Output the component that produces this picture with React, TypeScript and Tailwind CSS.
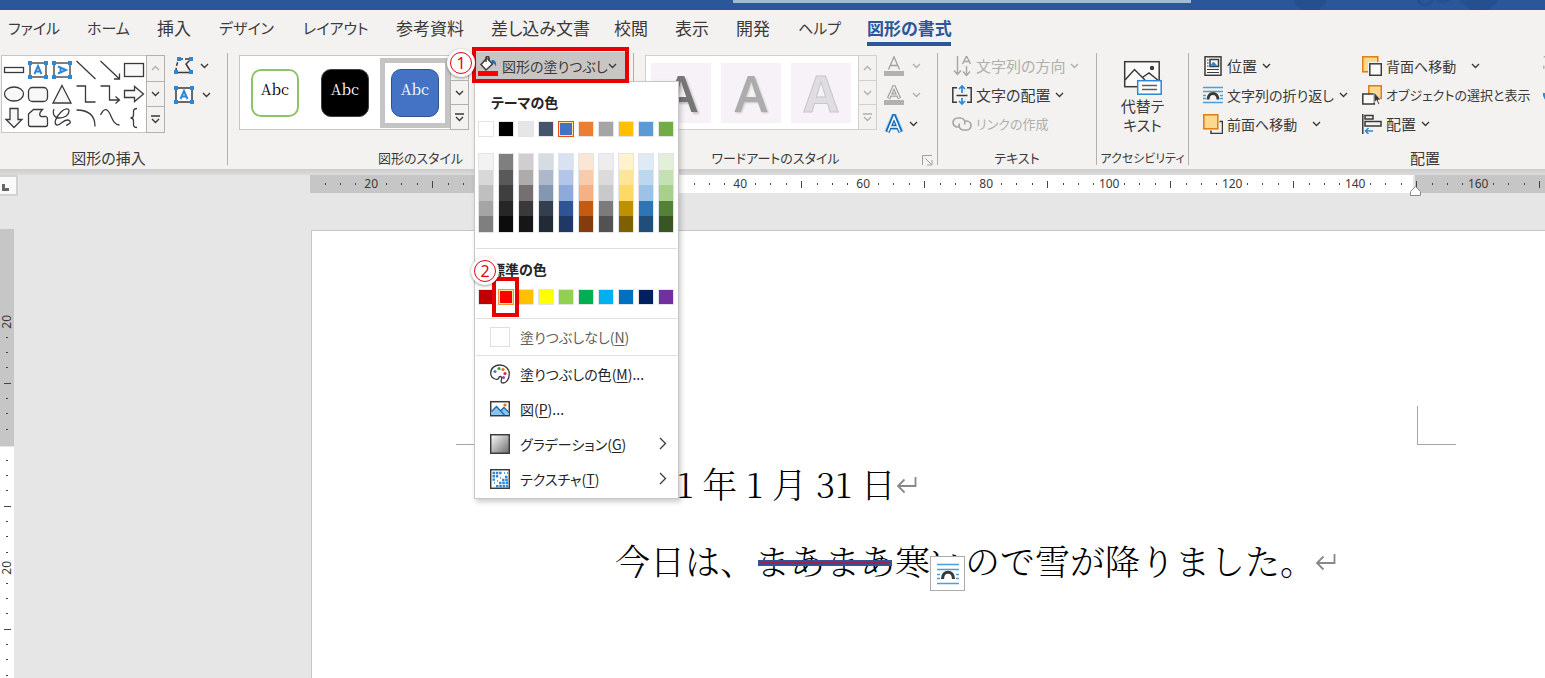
import type { ReactNode } from "react";
import clsx from "clsx";

const tabs = [
	{ label: "ファイル", width: "w-[79px]", kana: true },
	{ label: "ホーム", width: "w-[70px]", kana: true },
	{ label: "挿入", width: "w-[62px]" },
	{ label: "デザイン", width: "w-[84px]", kana: true },
	{ label: "レイアウト", width: "w-[93px]", kana: true },
	{ label: "参考資料", width: "w-[95px]" },
	{ label: "差し込み文書", width: "w-[123px]" },
	{ label: "校閲", width: "w-[61px]" },
	{ label: "表示", width: "w-[61px]" },
	{ label: "開発", width: "w-[62px]" },
	{ label: "ヘルプ", width: "w-[69px]", kana: true },
	{ label: "図形の書式", width: "w-[84px]", active: true },
];

const themeColors = [
	{ name: "白", base: "bg-white", shades: ["bg-[#f2f2f2]", "bg-[#d8d8d8]", "bg-[#bfbfbf]", "bg-[#a5a5a5]", "bg-[#7f7f7f]"] },
	{ name: "黒", base: "bg-black", shades: ["bg-[#7f7f7f]", "bg-[#595959]", "bg-[#3f3f3f]", "bg-[#262626]", "bg-[#0c0c0c]"] },
	{ name: "薄い灰色", base: "bg-[#e7e6e6]", shades: ["bg-[#d0cece]", "bg-[#aeabab]", "bg-[#757070]", "bg-[#3a3838]", "bg-[#171616]"] },
	{ name: "青灰", base: "bg-[#44546a]", shades: ["bg-[#d6dce4]", "bg-[#adb9ca]", "bg-[#8496b0]", "bg-[#323f4f]", "bg-[#222a35]"] },
	{ name: "青", base: "bg-[#4472c4]", shades: ["bg-[#d9e2f3]", "bg-[#b4c6e7]", "bg-[#8eaadb]", "bg-[#2f5496]", "bg-[#1f3864]"], selected: true },
	{ name: "オレンジ", base: "bg-[#ed7d31]", shades: ["bg-[#fbe5d5]", "bg-[#f7cbac]", "bg-[#f4b183]", "bg-[#c55a11]", "bg-[#833c0b]"] },
	{ name: "灰色", base: "bg-[#a5a5a5]", shades: ["bg-[#ededed]", "bg-[#dbdbdb]", "bg-[#c9c9c9]", "bg-[#7b7b7b]", "bg-[#525252]"] },
	{ name: "ゴールド", base: "bg-[#ffc000]", shades: ["bg-[#fff2cc]", "bg-[#fee599]", "bg-[#ffd965]", "bg-[#bf9000]", "bg-[#7f6000]"] },
	{ name: "薄い青", base: "bg-[#5b9bd5]", shades: ["bg-[#deebf6]", "bg-[#bdd7ee]", "bg-[#9cc3e5]", "bg-[#2e75b5]", "bg-[#1e4e79]"] },
	{ name: "緑", base: "bg-[#70ad47]", shades: ["bg-[#e2efd9]", "bg-[#c5e0b3]", "bg-[#a8d08d]", "bg-[#538135]", "bg-[#375623]"] },
];

const standardColors = [
	{ name: "濃い赤", color: "bg-[#c00000]" },
	{ name: "赤", color: "bg-[#ff0000]", selected: true },
	{ name: "オレンジ", color: "bg-[#ffc000]" },
	{ name: "黄", color: "bg-[#ffff00]" },
	{ name: "薄い緑", color: "bg-[#92d050]" },
	{ name: "緑", color: "bg-[#00b050]" },
	{ name: "薄い青", color: "bg-[#00b0f0]" },
	{ name: "青", color: "bg-[#0070c0]" },
	{ name: "濃い青", color: "bg-[#002060]" },
	{ name: "紫", color: "bg-[#7030a0]" },
];

const horizontalLabels = ["20", "", "20", "40", "60", "80", "100", "120", "140", "160"];
const verticalLabels = ["20", "", "20"];

function Chevron({ muted, up }: { muted?: boolean; up?: boolean }) {
	return (
		<svg width="9" height="6" viewBox="0 0 9 6" fill="none" stroke={muted ? "#b1afad" : "#3b3a39"} strokeWidth="1.4" className="shrink-0">
			<path d={up ? "M1 5l3.5-3.5L8 5" : "M1 1l3.5 3.5L8 1"} />
		</svg>
	);
}

function MoreIcon({ muted }: { muted?: boolean }) {
	return (
		<svg width="9" height="9" viewBox="0 0 9 9" fill="none" stroke={muted ? "#b1afad" : "#3b3a39"} strokeWidth="1.4">
			<path d="M0 1h9M1 4l3.5 3.5L8 4" />
		</svg>
	);
}

function GalleryScroll({ muted, upMuted }: { muted?: boolean; upMuted?: boolean }) {
	const button = "flex w-full flex-1 items-center justify-center border-b last:border-b-0";
	return (
		<div className={clsx("flex w-[19px] flex-col border bg-[#f3f2f1]", muted ? "border-[#d2d0ce]" : "border-[#b3b0ad]")}>
			<button aria-label="前の行" className={clsx(button, muted ? "border-[#d2d0ce]" : "border-[#b3b0ad]")}>
				<Chevron up muted={muted || upMuted} />
			</button>
			<button aria-label="次の行" className={clsx(button, muted ? "border-[#d2d0ce]" : "border-[#b3b0ad]")}>
				<Chevron muted={muted} />
			</button>
			<button aria-label="その他" className={button}>
				<MoreIcon muted={muted} />
			</button>
		</div>
	);
}

function Handles() {
	return (
		<g fill="#2b88d8" stroke="none">
			<rect x="2" y="3" width="4" height="4" />
			<rect x="18" y="3" width="4" height="4" />
			<rect x="2" y="17" width="4" height="4" />
			<rect x="18" y="17" width="4" height="4" />
		</g>
	);
}

function LetterBox({ vertical }: { vertical?: boolean }) {
	return (
		<>
			<rect x="4" y="5" width="16" height="14" fill="#fff" />
			<Handles />
			<g transform={vertical ? "rotate(90 12 12)" : undefined} stroke="#2b88d8" strokeWidth="2">
				<path d="M8.500 16L12 8l3.500 8M9.600 13.500h4.800" />
			</g>
		</>
	);
}

const shapes: { name: string; icon: ReactNode }[] = [
	{ name: "枠", icon: <rect x="2.500" y="9.500" width="19" height="5" fill="#fff" /> },
	{ name: "テキスト ボックス", icon: <LetterBox /> },
	{ name: "縦書きテキスト ボックス", icon: <LetterBox vertical /> },
	{ name: "線", icon: <path d="M2.500 3l19 18" /> },
	{ name: "矢印", icon: <path d="M2.500 3l19 18M21.500 15.500V21H16" /> },
	{ name: "正方形", icon: <rect x="2.500" y="5.500" width="19" height="13" fill="#f8f8f8" /> },
	{ name: "楕円", icon: <ellipse cx="12" cy="12" rx="9.500" ry="7" fill="#f8f8f8" /> },
	{ name: "角丸四角形", icon: <rect x="2.500" y="5.500" width="19" height="14" rx="4" fill="#f8f8f8" /> },
	{ name: "三角形", icon: <path d="M12 3.500L21 21H3z" fill="#f8f8f8" /> },
	{ name: "カギ線", icon: <path d="M2.500 4h9v16h10" /> },
	{ name: "カギ線矢印", icon: <path d="M2.500 4h9v14h10M17.500 14.500l4 3.500-4 3.500" /> },
	{ name: "右矢印", icon: <path d="M2.500 8.500h10V4.500l9 7.500-9 7.500v-4h-10z" fill="#f8f8f8" /> },
	{ name: "下矢印", icon: <path d="M8 2.500h8v11h4L12 21.500 4 13.500h4z" fill="#f8f8f8" /> },
	{ name: "フリーフォーム", icon: <path d="M2.500 8l5-4.500h9c-4 4-4 8 2 7 3-.5 3 2 3 4v4c0 1.500-1 2-2 2h-15c-1.500 0-2-1-2-2z" fill="#f8f8f8" /> },
	{ name: "曲線", icon: <path d="M4 3c-2 4 0 9 5 9 6 0 10-3 10-7 0-3-4-3-8 1-5 5-8 12-4 13 3 1 6-5 10-5 3 0 4 2 3 3-1 2-4 1-3 3" /> },
	{ name: "円弧", icon: <path d="M2.500 4C14 4 21 9 21 20.500" /> },
	{ name: "曲線コネクタ", icon: <path d="M2.500 9C6 2 9 2 12 8c3 7 5 11 9.500 11" /> },
	{ name: "中かっこ", icon: <path d="M15 2.500c-3 0-3.500 1-3.500 3V9c0 2-1 3-3 3 2 0 3 1 3 3v3.500c0 2 .5 3 3.500 3" /> },
];

function Icon({ children, size = 20 }: { children: ReactNode; size?: number }) {
	return (
		<svg width={size} height={size} viewBox={`0 0 ${size} ${size}`} fill="none" stroke="#3b3a39" strokeWidth="1.5" className="shrink-0">
			{children}
		</svg>
	);
}

function WrapIcon() {
	return (
		<Icon>
			<path d="M0 2.500h20M0 6.500h20M0 10.500h3M17 10.500h3M0 13.500h3M17 13.500h3M0 17.500h20" stroke="#4a9fdc" />
			<path d="M5 14.500c0-8 10-8 10 0" strokeWidth="3" fill="#f3f2f1" />
		</Icon>
	);
}

type CommandProps = {
	icon: ReactNode;
	label: string;
	size?: string;
	chevron?: "near" | "far";
	disabled?: boolean;
};

function Command({ icon, label, size, chevron, disabled }: CommandProps) {
	return (
		<button
			disabled={disabled}
			className={clsx("flex h-[29px] items-center whitespace-nowrap", size, disabled ? "text-[#b1afad]" : "text-[#3b3a39]")}
		>
			{icon}
			<span className={clsx("ml-1", chevron === "far" ? "mr-[15px]" : "mr-[5px]")}>{label}</span>
			{chevron && <Chevron muted={disabled} />}
		</button>
	);
}

type GroupProps = {
	label: string;
	width: string;
	labelClass?: string;
	launcher?: boolean;
	children: ReactNode;
};

function Group({ label, width, labelClass, launcher, children }: GroupProps) {
	return (
		<section aria-label={label} className={clsx("flex shrink-0", width)}>
			<div className="flex min-w-0 flex-1 flex-col">
				<div className="flex h-[87px]">{children}</div>
				<div className="mt-[10px] flex h-5 items-center">
					<span className={clsx("flex-1 text-center whitespace-nowrap", labelClass)}>{label}</span>
					{launcher && (
						<button aria-label={`${label}の設定`} className="w-5 pt-1 pl-[5px]">
							<svg width="11" height="11" viewBox="0 0 11 11" fill="none" stroke="#a19f9d">
								<path d="M.5 10V.5H10M3.500 3.500l6 6M10 5v5H5" />
							</svg>
						</button>
					)}
				</div>
			</div>
			<div className="mt-0.5 h-28 w-px bg-[#b3b0ad]" />
		</section>
	);
}

function StepMark({ step }: { step: string }) {
	return (
		<div className="flex size-7 items-center justify-center rounded-full bg-white shadow-[0_1px_3px_rgba(0,0,0,0.4)]">
			<div className="flex size-[22px] items-center justify-center rounded-full border border-[#e60012] font-['Noto_Sans',sans-serif] text-base leading-5 text-[#e60012]">
				{step}
			</div>
		</div>
	);
}

function MenuItem({ icon, label, accessKey, suffix, submenu }: { icon: ReactNode; label: string; accessKey: string; suffix?: string; submenu?: boolean }) {
	return (
		<button role="menuitem" className="flex h-[35px] w-full items-center pr-[11px] pl-[15px] text-[#252423]">
			{icon}
			<span className="ml-[10px] flex-1 text-left whitespace-nowrap">
				{label}(<u className="underline-offset-2">{accessKey}</u>){suffix}
			</span>
			{submenu && (
				<svg width="8" height="13" viewBox="0 0 8 13" fill="none" stroke="#3b3a39" strokeWidth="1.3">
					<path d="M1 1l5.500 5.500L1 12" />
				</svg>
			)}
		</button>
	);
}

function FillMenu() {
	return (
		<div role="menu" className="absolute top-[30px] left-0 z-10 w-[205px] border border-[#c8c6c4] bg-white pb-0.5 text-sm shadow-[2px_3px_5px_rgba(0,0,0,0.2)]">
			<h3 className="flex h-[39px] items-center pl-4 font-bold text-[#252423]">テーマの色</h3>
			<div className="flex gap-1 px-[3px]">
				{themeColors.map((c) => (
					<button
						key={c.name}
						aria-label={c.name}
						className={clsx("size-4 border", c.base, c.selected ? "border-[#eb4f0e] shadow-[inset_0_0_0_1px_#ffe294]" : "border-[#e2e4e7]")}
					/>
				))}
			</div>
			<div className="mt-4 mb-[15px] flex gap-1 px-[3px]">
				{themeColors.map((c) => (
					<div key={c.name} className="flex h-20 w-4 flex-col border border-[#e2e4e7]">
						{c.shades.map((shade, i) => (
							<button key={shade} aria-label={`${c.name} ${i + 1}`} className={clsx("w-full flex-1", shade)} />
						))}
					</div>
				))}
			</div>
			<hr className="mx-px border-[#e1dfdd]" />
			<h3 className="flex h-10 items-center pl-4 font-bold text-[#252423]">標準の色</h3>
			<div className="mb-[13px] flex gap-1 px-[3px]">
				{standardColors.map((c) => (
					<button
						key={c.name}
						aria-label={c.name}
						className={clsx("size-4 border", c.color, c.selected ? "border-[#f29436] shadow-[inset_0_0_0_1px_#ffe294]" : "border-[#e2e4e7]")}
					/>
				))}
			</div>
			<hr className="mx-px border-[#e1dfdd]" />
			<button role="menuitem" className="flex h-9 w-full items-center pl-[15px] text-[#605e5c]">
				<span className="size-5 border border-[#e1dfdd]" />
				<span className="ml-[10px] whitespace-nowrap">
					塗りつぶしなし(<u className="underline-offset-2">N</u>)
				</span>
			</button>
			<hr className="mx-px border-[#e1dfdd]" />
			<MenuItem
				label="塗りつぶしの色"
				accessKey="M"
				suffix="..."
				icon={
					<Icon>
						<path d="M9 13c0 2-2 3-4 2C2 14 .7 11.500.7 9 .7 4 5 1 10 1s9.300 3.500 9.300 9-3.300 9-6.300 9c-2.500 0-2-2-1.500-3.500.5-2-.5-4-2.500-2.500z" fill="#fff" strokeWidth="1.300" />
						<g stroke="none">
							<circle cx="5" cy="7.500" r="1.600" fill="#2b88d8" />
							<circle cx="9" cy="4.500" r="1.600" fill="#2ca02c" />
							<circle cx="13" cy="5.500" r="1.600" fill="#e8700a" />
							<circle cx="15" cy="9.500" r="1.600" fill="#d13438" />
							<circle cx="13.500" cy="13.500" r="1.600" fill="#8e4db8" />
						</g>
					</Icon>
				}
			/>
			<MenuItem
				label="図"
				accessKey="P"
				suffix="..."
				icon={
					<Icon>
						<rect x=".7" y="2.700" width="18.600" height="14" fill="#fff" />
						<path d="M1.500 16V12L6.500 7l4 4 3-3 5 5v3h-17z" fill="#8cc4ee" stroke="none" />
						<path d="M1.500 12.500L6.500 7.500l8 8.500M11 11.500l3-3 5 5" stroke="#1f6fb5" />
						<circle cx="15" cy="6" r="1.600" fill="#e8700a" stroke="none" />
					</Icon>
				}
			/>
			<MenuItem
				label="グラデーション"
				accessKey="G"
				submenu
				icon={
					<Icon>
						<defs>
							<linearGradient id="grad" x1="0" y1="0" x2="1" y2="1">
								<stop offset="0" stopColor="#fff" />
								<stop offset="1" stopColor="#6a6a6a" />
							</linearGradient>
						</defs>
						<rect x=".7" y=".7" width="18.600" height="18.600" fill="url(#grad)" />
					</Icon>
				}
			/>
			<MenuItem
				label="テクスチャ"
				accessKey="T"
				submenu
				icon={
					<Icon>
						<rect x=".7" y=".7" width="18.600" height="18.600" fill="#fff" />
						<g stroke="#2b88d8" strokeWidth="2.400" strokeDasharray="2.500 .8">
							<path d="M2.500 4h9M2.500 7.300h6M2.500 10.600h2.600M15 8h3M12 11h6M9 14h9M6 17.300h12" />
						</g>
						<path d="M14 4h1M17 4h1M10 9h1M4 14h1M7 12h1" stroke="#2b88d8" />
					</Icon>
				}
			/>
		</div>
	);
}

function Ribbon() {
	return (
		<div className="flex bg-[#f3f2f1] pt-[5px] pb-px text-[15px] leading-5 text-[#3b3a39]">
			<Group label="図形の挿入" width="w-[228px]" labelClass="pr-[10px]">
				<div className="mt-1 ml-px flex h-[78px]">
					<div className="grid grid-cols-[repeat(6,24px)] border border-r-0 border-[#c8c6c4] bg-white py-[2px]">
						{shapes.map((shape) => (
							<button key={shape.name} aria-label={shape.name} className="h-6">
								<svg width="24" height="24" viewBox="0 0 24 24" fill="none" stroke="#3b3a39" strokeWidth="1.300">
									{shape.icon}
								</svg>
							</button>
						))}
					</div>
					<GalleryScroll upMuted />
				</div>
				<div className="ml-[7px]">
					<button aria-label="図形の編集" className="flex h-[29px] items-center gap-1">
						<svg width="24" height="24" viewBox="0 0 24 24" fill="none" stroke="#3b3a39" strokeWidth="1.500">
							<path d="M7 5h12M4 18c0-5 1-9 3-13" strokeDasharray="4 2" />
							<path d="M19 5l-5 5 5 8M4 18.500h15" />
							<g fill="#2b88d8" stroke="none">
								<rect x="5" y="3" width="4" height="4" />
								<rect x="17" y="3" width="4" height="4" />
								<rect x="2" y="16" width="4" height="4" />
								<rect x="17" y="16" width="4" height="4" />
							</g>
						</svg>
						<Chevron />
					</button>
					<button aria-label="テキスト ボックスの描画" className="flex h-[29px] items-center gap-[6px]">
						<svg width="24" height="24" viewBox="0 0 24 24" fill="none" stroke="#3b3a39" strokeWidth="1.500">
							<LetterBox />
						</svg>
						<Chevron />
					</button>
				</div>
			</Group>

			<Group label="図形のスタイル" width="w-[406px]" labelClass="text-[13px]" launcher>
				<div className="mt-1 ml-[11px] flex h-[75px]">
					<div className="flex items-center border border-r-0 border-[#c8c6c4] bg-white font-['Noto_Serif_CJK_JP','Liberation_Serif',serif] text-[15px] leading-5">
						<button className="flex size-[70px] items-center justify-center">
							<span className="size-12 rounded-[10px] border-2 border-[#8fc36b] pt-2 text-black">Abc</span>
						</button>
						<button className="flex size-[70px] items-center justify-center">
							<span className="size-12 rounded-[10px] border border-[#404040] bg-black pt-[9px] text-white">Abc</span>
						</button>
						<button className="flex size-[70px] items-center justify-center border-[5px] border-[#c4c4c4]">
							<span className="size-12 rounded-[10px] border border-[#2f528f] bg-[#4472c4] pt-[9px] text-white">Abc</span>
						</button>
					</div>
					<GalleryScroll />
				</div>
				<div className="relative ml-[5px]">
					<button aria-haspopup="menu" aria-expanded className="mt-px flex h-7 w-[152px] items-center bg-[#c8c6c4] pl-1 text-sm whitespace-nowrap">
						<Icon>
							<path d="M9 2L3 8.500l5 5.500 6.500-6L9.500 2.500" fill="#fff" />
							<path d="M8 6V2c0-2 3-2 3 0v3" />
							<path d="M13.500 4c3-.5 5.500 2 4.500 7-1-3-2-4-4-4z" fill="#1f6fb5" stroke="none" />
							<rect x="0" y="15" width="20" height="5" fill="#ff0000" stroke="none" />
						</Icon>
						<span className="ml-1">図形の塗りつぶし</span>
						<Chevron />
					</button>
					<FillMenu />
					<div className="pointer-events-none absolute -top-1 -left-0.5 z-20 h-9 w-[157px] border-4 border-[#e60000]" />
					<div className="pointer-events-none absolute -top-0.5 -left-[27px] z-20">
						<StepMark step="1" />
					</div>
					<div className="pointer-events-none absolute top-[226px] left-[18px] z-20 h-10 w-[27px] border-4 border-[#e60000]" />
					<div className="pointer-events-none absolute top-[206px] -left-[3px] z-20">
						<StepMark step="2" />
					</div>
				</div>
			</Group>

			<Group label="ワードアートのスタイル" width="w-[304px]" labelClass="text-[13px]" launcher>
				<div className="mt-1 ml-[11px] flex h-[75px]">
					<div className="flex items-center gap-[10px] border border-r-0 border-[#d2d0ce] bg-white pr-[7px] pl-[5px] font-['Open_Sans',sans-serif] text-[50px] leading-[60px]">
						<button className="size-[60px] bg-[#f6f2f8] font-semibold text-[#767676] [text-shadow:2px_2px_2px_#c8c6c4]">A</button>
						<button className="size-[60px] bg-[#f6f2f8] font-semibold text-[#acacac] [text-shadow:1px_1px_2px_#c8c6c4]">A</button>
						<button className="size-[60px] bg-[#f6f2f8] font-bold text-[#e0dde2] [-webkit-text-stroke:1px_#c8c6c8]">A</button>
					</div>
					<GalleryScroll muted />
				</div>
				<div className="ml-[7px]">
					<button disabled aria-label="文字の塗りつぶし" className="flex h-[29px] items-center gap-2">
						<Icon>
							<path d="M4.500 13.500L10 .8l5.500 12.700M6.500 9.500h7" stroke="#a19f9d" strokeWidth="1.300" />
							<rect x="0" y="15" width="20" height="5" fill="#b3b0ad" stroke="none" />
						</Icon>
						<Chevron muted />
					</button>
					<button disabled aria-label="文字の輪郭" className="flex h-[29px] items-center gap-2">
						<Icon>
							<path d="M4.500 13.500L10 1.500l5.500 12M6.500 10h7" stroke="#a19f9d" strokeWidth="3.600" />
							<path d="M4.800 13L10 1.500l5.200 11.500M6.500 10h7" stroke="#f3f2f1" strokeWidth="1.200" />
							<rect x="0" y="15" width="20" height="5" fill="#b3b0ad" stroke="none" />
						</Icon>
						<Chevron muted />
					</button>
					<button aria-label="文字の効果" className="flex h-[29px] items-center gap-[5px]">
						<Icon>
							<path d="M3 18L10 1.500 17 18M5.500 13h9" stroke="#9fd0f2" strokeWidth="5.500" />
							<path d="M3.500 18L10 2.500 16.500 18M6 13h8" stroke="#0f6cbd" strokeWidth="4.500" />
							<path d="M4 17.500L10 3l6 14.500M6 13h8" stroke="#fff" strokeWidth="1.600" />
						</Icon>
						<Chevron />
					</button>
				</div>
			</Group>

			<Group label="テキスト" width="w-[159px]" labelClass="text-[13px]">
				<div className="ml-[14px]">
					<Command
						label="文字列の方向"
						chevron="near"
						disabled
						icon={
							<Icon>
								<g stroke="#a8a6a4" strokeWidth="1.400">
									<path d="M5.500 0v18M2 14.500l3.500 4 3.500-4M14.500 10v9M11 15.500l3.500 4 3.500-4M10.500 8L14.500 0l4 8M12 5.500h5" />
								</g>
							</Icon>
						}
					/>
					<Command
						label="文字の配置"
						chevron="near"
						icon={
							<Icon>
								<path d="M5 2.700H.8v14.600H5M15 2.700h4.200v14.600H15M4.500 10.500h11" />
								<path d="M10 1v7M10 13v6M7 4l3-3 3 3M7 16l3 3 3-3" stroke="#2b88d8" strokeWidth="1.700" />
							</Icon>
						}
					/>
					<Command
						label="リンクの作成"
						size="text-[13px]"
						disabled
						icon={
							<Icon>
								<g stroke="#a8a6a4" strokeWidth="1.700">
									<path d="M8 13H5.500a4.500 4.500 0 010-9h3a4.500 4.500 0 014 6.500" />
									<path d="M12 7h2.500a4.500 4.500 0 010 9h-3a4.500 4.500 0 01-4-6.500" />
								</g>
							</Icon>
						}
					/>
				</div>
			</Group>

			<Group label="アクセシビリティ" width="w-[92px]" labelClass="text-xs">
				<button className="mx-auto flex flex-col items-center pt-[9px] leading-[19px]">
					<svg width="40" height="36" viewBox="0 0 40 36" fill="none" stroke="#3b3a39" strokeWidth="1.500">
						<rect x="1.700" y="1.700" width="34.500" height="25" fill="#fafafa" />
						<path d="M2 20l9.500-10.500L22 20M20 17l6-4 10 8" />
						<circle cx="29" cy="8" r="2.200" fill="#3b3a39" stroke="none" />
						<rect x="14.700" y="20.700" width="23.500" height="13.500" fill="#fff" stroke="#2b88d8" />
						<path d="M19 25.500h15M19 29.500h15" stroke="#605e5c" />
					</svg>
					<span>代替テ</span>
					<span>キスト</span>
				</button>
			</Group>

			<section aria-label="配置" className="min-w-0 flex-1 overflow-hidden pl-[14px]">
				<div className="flex h-[87px]">
					<div className="w-[159px] shrink-0">
						<Command
							label="位置"
							chevron="near"
							icon={
								<Icon>
									<rect x="2" y=".8" width="16" height="18.500" fill="#fafafa" />
									<rect x="7" y="3.500" width="8.500" height="7" />
									<path d="M8 9l2.500-3 3.500 4z" fill="#2b88d8" stroke="#2b88d8" strokeWidth="1" />
									<path d="M4 4h1.500M4 7h1.500M4 10h1.500M4 13.500h12M4 16.500h12" strokeWidth="1" />
								</Icon>
							}
						/>
						<Command label="文字列の折り返し" size="text-sm" chevron="near" icon={<WrapIcon />} />
						<Command
							label="前面へ移動"
							size="text-sm"
							chevron="far"
							icon={
								<Icon>
									<path d="M16.500 7.500h3v12H8v-3" />
									<rect x=".8" y=".8" width="14" height="14" fill="#fbd98f" stroke="#e07b0d" />
								</Icon>
							}
						/>
					</div>
					<div className="w-[181px] shrink-0">
						<Command
							label="背面へ移動"
							size="text-sm"
							chevron="far"
							icon={
								<Icon>
									<rect x=".8" y=".8" width="15" height="15" fill="#fbd98f" stroke="#e07b0d" />
									<rect x="6" y="6" width="14" height="14" fill="#f3f2f1" stroke="none" />
									<rect x="7.800" y="7.800" width="11.500" height="11.500" fill="#fafafa" />
								</Icon>
							}
						/>
						<Command
							label="オブジェクトの選択と表示"
							size="text-[13px]"
							icon={
								<Icon>
									<rect x="6.800" y=".8" width="12.500" height="12.500" fill="#fbd98f" stroke="#e07b0d" />
									<rect x=".8" y="9" width="11.500" height="10" fill="#fafafa" />
									<path d="M12 7v10.500l2.500-2 1.700 4 1.500-.8-1.700-3.700h3z" fill="#3b3a39" stroke="#fff" strokeWidth=".7" />
								</Icon>
							}
						/>
						<Command
							label="配置"
							chevron="near"
							icon={
								<Icon>
									<path d="M.8 0v20M3 1.500h8v3.500H3zM3 7.500h16v4.500H3z" />
									<path d="M11 17H3.500M6.500 14L3.500 17l3 3" stroke="#2b88d8" />
								</Icon>
							}
						/>
					</div>
					<div className="shrink-0">
						<div className="flex h-[29px] items-center">
							<Icon>
								<rect x=".8" y=".8" width="18" height="18" stroke="#b1afad" strokeDasharray="3 12" />
							</Icon>
						</div>
						<div className="flex h-[29px] items-center">
							<Icon>
								<path d="M1 8a8 8 0 1016 2" stroke="#2b88d8" strokeWidth="2" />
							</Icon>
						</div>
					</div>
				</div>
				<div className="mt-[10px] h-5 pl-[207px]">配置</div>
			</section>
		</div>
	);
}

function HorizontalRuler() {
	return (
		<div className="grid h-[18px] flex-1 overflow-hidden">
			<div className="flex [grid-area:1/1]">
				<div className="w-[183px] bg-[#c6c6c6]" />
				<div className="w-[920px] bg-white" />
				<div className="ml-0.5 flex-1 bg-[#c6c6c6]" />
			</div>
			<div className="-ml-2 flex w-0 font-['Noto_Sans',sans-serif] text-xs leading-none [grid-area:1/1]">
				{horizontalLabels.map((label, i) => (
					<div key={i} className="flex w-[123px] shrink-0 items-center">
						{[0, 1, 2, 3, 4, 5, 6, 7].map((slot) => (
							<div key={slot} className="flex w-0 flex-1 justify-center">
								{slot === 0 && <i className="h-[7px] w-px bg-[#444]" />}
								{slot === 4 && label && <span>{label}</span>}
								{slot % 4 !== 0 && <i className="h-0.5 w-px bg-[#444]" />}
							</div>
						))}
					</div>
				))}
				<i className="mt-[6px] ml-[7px] h-[7px] w-px shrink-0 bg-[#444]" />
			</div>
		</div>
	);
}

function VerticalRuler() {
	return (
		<div className="mt-9 grid w-[14px] shrink-0 overflow-hidden">
			<div className="flex flex-col [grid-area:1/1]">
				<div className="mb-px h-[217px] bg-[#c6c6c6]" />
				<div className="flex-1 bg-white" />
			</div>
			<div className="h-0 pt-[85px] font-['Noto_Sans',sans-serif] text-xs leading-[14px] [grid-area:1/1]">
				{verticalLabels.map((label, i) => (
					<div key={i} className="flex h-[123px] flex-col">
						{[0, 1, 2, 3, 4, 5, 6, 7].map((slot) => (
							<div key={slot} className="flex h-0 flex-1 items-center justify-center">
								{slot === 0 && label && <span className="rotate-180 [writing-mode:vertical-rl]">{label}</span>}
								{slot === 4 && <i className="h-px w-[7px] bg-[#444]" />}
								{slot % 4 !== 0 && <i className="h-px w-0.5 bg-[#444]" />}
							</div>
						))}
					</div>
				))}
			</div>
		</div>
	);
}

function ReturnMark() {
	return (
		<svg width="22" height="20" viewBox="0 0 22 20" fill="none" stroke="#8a8886" strokeWidth="1.800" className="mb-2 inline-block align-middle">
			<path d="M19.500 2v9H2M8.500 4.500L2 11l6.500 6.500" />
		</svg>
	);
}

function Page() {
	return (
		<article className="mt-[37px] ml-[297px] min-w-0 flex-1 overflow-hidden border-t border-l border-[#c6c6c6] bg-white pt-[175px] font-['Noto_Serif_CJK_JP','Liberation_Serif',serif] text-[35px] leading-[77px] font-light text-black [font-feature-settings:normal]">
			<div className="flex gap-[922px] pl-[144px]">
				<div className="h-[39px] w-[39px] shrink-0 border-r border-b border-[#a6a6a6]" />
				<div className="h-[39px] w-[39px] shrink-0 border-b border-l border-[#a6a6a6]" />
			</div>
			<div className="pl-[303px] whitespace-nowrap">
				<p className="pl-1">
					2021 年 1 月 31 日<ReturnMark />
				</p>
				<p>
					今日は、
					<span className="relative">
						まあまあ
						<span className="absolute top-1/2 right-[3px] left-[3px] h-1.5 border-2 border-[#2f5597] bg-[#a0204c]" />
					</span>
					寒
					<span className="relative">
						い
						<button aria-label="レイアウト オプション" className="absolute top-[21px] left-0 flex size-[35px] items-center justify-center border border-[#ababab] bg-white">
							<svg width="22" height="22" viewBox="0 0 22 22" fill="none" stroke="#4a9fdc" strokeWidth="1.500">
								<path d="M0 1.500h22M0 6.500h22M0 11.500h3M19 11.500h3M0 15.500h3M19 15.500h3M0 20.500h22" />
								<path d="M5.500 16c0-9 11-9 11 0" stroke="#3b3a39" strokeWidth="3.200" />
							</svg>
						</button>
					</span>
					ので雪が降りました。
					<ReturnMark />
				</p>
			</div>
		</article>
	);
}

export default function App() {
	return (
		<div lang="ja" className="flex min-h-screen flex-col overflow-hidden bg-[#e6e6e6] font-['Noto_Sans_CJK_JP',sans-serif] text-[15px] text-[#3b3a39] [font-feature-settings:'palt']">
			<div className="flex h-2.5 items-start overflow-hidden bg-[#2b579a] pl-[733px]">
				<div className="h-[3px] w-[458px] shrink-0 bg-[#a3b9d6]" />
				<svg width="260" height="10" viewBox="0 0 260 10" fill="none" stroke="#264f90" strokeWidth="3" className="ml-[100px] shrink-0">
					<path d="M4 0c0 7 8 4 7 10h16c-1-6 7-3 7-10z" fill="#264f90" />
					<circle cx="134" cy="-2" r="7" />
					<circle cx="152" cy="-5" r="7" />
					<path d="M170 0c3 4 8 4 10 10h16c3-5 8-6 10-10z" fill="#264f90" />
				</svg>
			</div>
			<nav className="flex h-9 bg-[#f3f2f1] pl-2 leading-none">
				{tabs.map((tab) => (
					<button
						key={tab.label}
						className={clsx(
							"shrink-0 border-b-4 pt-[3px] text-left whitespace-nowrap",
							tab.width,
							tab.kana ? "text-[15px]" : "text-[17px]",
							tab.active ? "border-[#2b579a] font-bold text-[#2b579a]" : "border-transparent",
						)}
					>
						{tab.label}
					</button>
				))}
			</nav>
			<Ribbon />
			<div className="h-1.5 bg-linear-to-b from-[#cdcdcd] to-[#dcdcdc]" />
			<div className="flex h-[18px]">
				<div className="w-[310px] shrink-0">
					<button aria-label="タブの種類" className="flex h-[21px] w-[18px] items-center border-2 border-l-0 border-[#d2d2d2] bg-[#fafafa] pt-1 pl-0.5">
						<span className="size-[7px] border-b-[3px] border-l-[3px] border-[#666]" />
					</button>
				</div>
				<div className="relative flex min-w-0 flex-1">
					<HorizontalRuler />
					<svg width="11" height="10" viewBox="0 0 11 10" fill="#fff" stroke="#8a8886" className="absolute top-[11px] left-[1100px]">
						<path d="M.5 9.500V5.500l5-5 5 5v4z" />
					</svg>
				</div>
			</div>
			<main className="flex flex-1">
				<VerticalRuler />
				<Page />
			</main>
		</div>
	);
}
